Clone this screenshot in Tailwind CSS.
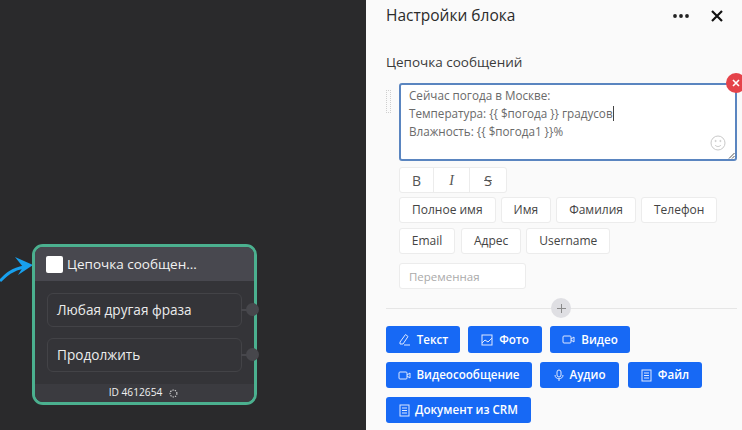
<!DOCTYPE html>
<html lang="ru">
<head>
  <meta charset="UTF-8" />
  <title>Настройки блока</title>
  <script src="https://cdn.jsdelivr.net/npm/@tailwindcss/browser@4"></script>
</head>
<body class="w-[742px] h-[430px] overflow-hidden flex font-['Open_Sans',sans-serif]">
  <!-- Холст -->
  <main class="relative w-[366px] h-full bg-[#2a2a2c] overflow-hidden">
    <svg class="absolute left-0 top-[255px]" width="36" height="30" viewBox="0 0 36 30" fill="none">
      <path d="M0 26 C6 20 12 14 24 12" stroke="#18a0ee" stroke-width="3"/>
      <path d="M15 2 L33 10 L18 20 L23 12 Z" fill="#18a0ee"/>
    </svg>
    <div class="absolute left-[32px] top-[244px] w-[225px] h-[161px] rounded-[11px] border-[3px] border-[#4bb08f] bg-[#343438] flex flex-col">
      <div class="h-[34px] shrink-0 rounded-t-[8px] bg-[#48484f] flex items-center pl-[11px] gap-[4px]">
        <div class="w-[17px] h-[17px] rounded-[2px] bg-white"></div>
        <span class="text-[13.5px] text-[#f2f2f2]">Цепочка сообщен...</span>
      </div>
      <div class="flex-1 flex flex-col gap-[11px] pt-[12px] pl-[12px] pr-[12px]">
        <div class="relative h-[34px] rounded-[6px] border border-[#434347] flex items-center pl-[9px] text-[13.6px] text-[#ececec]">
          Любая другая фраза
          <span class="absolute right-[-8px] top-[15px] w-[8px] h-[2px] bg-[#47474c]"></span>
          <span class="absolute right-[-18px] top-[9px] w-[13px] h-[13px] rounded-full bg-[#47474c]"></span>
        </div>
        <div class="relative h-[34px] rounded-[6px] border border-[#434347] flex items-center pl-[9px] text-[13.6px] text-[#ececec]">
          Продолжить
          <span class="absolute right-[-8px] top-[15px] w-[8px] h-[2px] bg-[#47474c]"></span>
          <span class="absolute right-[-18px] top-[9px] w-[13px] h-[13px] rounded-full bg-[#47474c]"></span>
        </div>
      </div>
      <div class="h-[18px] shrink-0 rounded-b-[8px] bg-[#3b3b40] flex items-center justify-center gap-[7px] pr-[2px] text-[10.2px] text-[#f0f0f0]">
        <span>ID 4612654</span>
        <svg width="9" height="9" viewBox="0 0 10 10" fill="none" stroke="#d8d8d8" stroke-width="1.2" stroke-dasharray="1.5 1.2"><circle cx="5" cy="5" r="3.8"/></svg>
      </div>
    </div>
  </main>

  <!-- Панель настроек -->
  <aside class="relative w-[376px] h-full bg-[#fafafa] text-[#333]">
    <header class="flex items-center h-[31px] pl-[20px]">
      <h1 class="text-[15.5px] text-[#2b2b2b]">Настройки блока</h1>
      <div class="ml-auto flex items-center">
        <svg width="18" height="6" viewBox="0 0 18 6" fill="#222"><circle cx="3" cy="3" r="1.9"/><circle cx="9" cy="3" r="1.9"/><circle cx="15" cy="3" r="1.9"/></svg>
        <svg class="ml-[21px] mr-[19px]" width="12" height="12" viewBox="0 0 12 12" stroke="#111" stroke-width="2.2"><path d="M1 1 L11 11 M11 1 L1 11"/></svg>
      </div>
    </header>

    <h2 class="mt-[22px] pl-[20px] text-[13.5px] leading-[18px] text-[#3a3a3a]">Цепочка сообщений</h2>

    <div class="relative mt-[12px] ml-[33px] mr-[5px]">
      <div class="absolute left-[-13px] top-[7px] w-[5px] h-[23px] border border-dotted border-[#cfcfcf]"></div>
      <div class="relative h-[78px] rounded-[3px] border-2 border-[#5a85c0] bg-white pl-[8px] pt-[1px] text-[11.7px] leading-[18px] text-[#6a6a6a]">
        <div>Сейчас погода в Москве:</div>
        <div>Температура: {{ $погода }} градусов<span class="inline-block w-px h-[15px] align-[-3px] bg-[#444]"></span></div>
        <div>Влажность: {{ $погода1 }}%</div>
        <svg class="absolute right-[9px] bottom-[8px]" width="16" height="16" viewBox="0 0 16 16" fill="none" stroke="#c9c9c9"><circle cx="8" cy="8" r="7"/><path d="M5 10 C6.5 12 9.5 12 11 10"/><circle cx="5.6" cy="6" r=".6"/><circle cx="10.4" cy="6" r=".6"/></svg>
        <svg class="absolute right-0 bottom-0" width="7" height="7" viewBox="0 0 7 7" stroke="#555"><path d="M1 6.5 L6.5 1 M4 6.5 L6.5 4"/></svg>
      </div>
      <button class="absolute right-[-9px] top-[-10px] w-[20px] h-[20px] rounded-full bg-[#e5434a] flex items-center justify-center">
        <svg width="8" height="8" viewBox="0 0 8 8" stroke="#fff" stroke-width="1.6"><path d="M1 1 L7 7 M7 1 L1 7"/></svg>
      </button>
    </div>

    <div class="ml-[33px] mt-[6px] flex w-fit h-[26px] rounded-[3px] bg-white border border-[#ececec] text-[14px] text-[#555]">
      <span class="w-[34px] flex items-center justify-center font-medium border-r border-[#ececec]">B</span>
      <span class="w-[36px] flex items-center justify-center italic font-['Liberation_Serif',serif] border-r border-[#ececec]">I</span>
      <span class="w-[36px] flex items-center justify-center line-through">S</span>
    </div>

    <div class="ml-[33px] mt-[4px] flex gap-[5px] text-[12px] text-[#444]">
      <span class="h-[26px] px-[12px] flex items-center rounded-[3px] bg-white border border-[#ececec]">Полное имя</span>
      <span class="h-[26px] px-[12px] flex items-center rounded-[3px] bg-white border border-[#ececec]">Имя</span>
      <span class="h-[26px] px-[12px] flex items-center rounded-[3px] bg-white border border-[#ececec]">Фамилия</span>
      <span class="h-[26px] px-[12px] flex items-center rounded-[3px] bg-white border border-[#ececec]">Телефон</span>
    </div>
    <div class="ml-[33px] mt-[5px] flex gap-[5px] text-[12px] text-[#444]">
      <span class="h-[26px] w-[56px] mr-[1px] justify-center flex items-center rounded-[3px] bg-white border border-[#ececec]">Email</span>
      <span class="h-[26px] px-[12px] flex items-center rounded-[3px] bg-white border border-[#ececec]">Адрес</span>
      <span class="h-[26px] px-[12px] flex items-center rounded-[3px] bg-white border border-[#ececec]">Username</span>
    </div>
    <div class="ml-[33px] mt-[9px] w-[127px] h-[26px] pl-[9px] pt-[1px] flex items-center rounded-[3px] bg-white border border-[#ececec] text-[11.5px] text-[#aaa]">Переменная</div>

    <div class="relative mt-[9px] ml-[20px] mr-[5px] h-[20px] flex items-center">
      <div class="w-full h-px bg-[#e6e6e6]"></div>
      <span class="absolute left-[165px] top-0 w-[20px] h-[20px] rounded-full bg-[#dfdfe3] flex items-center justify-center">
        <svg width="9" height="9" viewBox="0 0 9 9" stroke="#8a8a8a"><path d="M4.5 0 V9 M0 4.5 H9"/></svg>
      </span>
    </div>

    <div class="ml-[20px] mt-[8px] flex flex-col gap-[9px] text-[11.6px] font-semibold text-white">
      <div class="flex gap-[8px]">
        <button class="h-[27px] w-[74px] flex items-center justify-center gap-[6px] rounded-[3px] bg-[#1769f5]">
          <svg width="13" height="13" viewBox="0 0 13 13" fill="none" stroke="#dfe9ff"><path d="M2 9 L7.5 1.5 L10 3.5 L5 11 H2 Z M6 12 H12"/></svg>Текст
        </button>
        <button class="h-[27px] w-[74px] flex items-center justify-center gap-[6px] rounded-[3px] bg-[#1769f5]">
          <svg width="12" height="12" viewBox="0 0 12 12" fill="none" stroke="#dfe9ff"><rect x="1" y="1" width="10" height="10"/><path d="M1 9 L4 6 L7 8 L11 4"/></svg>Фото
        </button>
        <button class="h-[27px] w-[80px] flex items-center justify-center gap-[6px] rounded-[3px] bg-[#1769f5]">
          <svg width="13" height="11" viewBox="0 0 13 11" fill="none" stroke="#dfe9ff"><rect x="1" y="2" width="8" height="7" rx="1"/><path d="M9 5 L12 3 V8 L9 6"/></svg>Видео
        </button>
      </div>
      <div class="flex gap-[8px]">
        <button class="h-[26px] w-[146px] flex items-center justify-center gap-[5px] rounded-[3px] bg-[#1769f5]">
          <svg width="13" height="11" viewBox="0 0 13 11" fill="none" stroke="#dfe9ff"><rect x="1" y="2" width="8" height="7" rx="1"/><path d="M9 5 L12 3 V8 L9 6"/></svg>Видеосообщение
        </button>
        <button class="h-[26px] w-[79px] flex items-center justify-center gap-[6px] rounded-[3px] bg-[#1769f5]">
          <svg width="10" height="13" viewBox="0 0 10 13" fill="none" stroke="#dfe9ff"><rect x="3" y="1" width="4" height="7" rx="2"/><path d="M1 6 C1 11 9 11 9 6 M5 10 V12"/></svg>Аудио
        </button>
        <button class="h-[26px] w-[74px] ml-[1px] flex items-center justify-center gap-[6px] rounded-[3px] bg-[#1769f5]">
          <svg width="11" height="13" viewBox="0 0 11 13" fill="none" stroke="#dfe9ff"><rect x="1" y="1" width="9" height="11"/><path d="M3 4 H8 M3 6.5 H8 M3 9 H8"/></svg>Файл
        </button>
      </div>
      <div class="flex">
        <button class="h-[26px] w-[145px] flex items-center justify-center gap-[5px] rounded-[3px] bg-[#1769f5]">
          <svg width="11" height="13" viewBox="0 0 11 13" fill="none" stroke="#dfe9ff"><rect x="1" y="1" width="9" height="11"/><path d="M3 4 H8 M3 6.5 H8 M3 9 H8"/></svg>Документ из CRM
        </button>
      </div>
    </div>
  </aside>
</body>
</html>
